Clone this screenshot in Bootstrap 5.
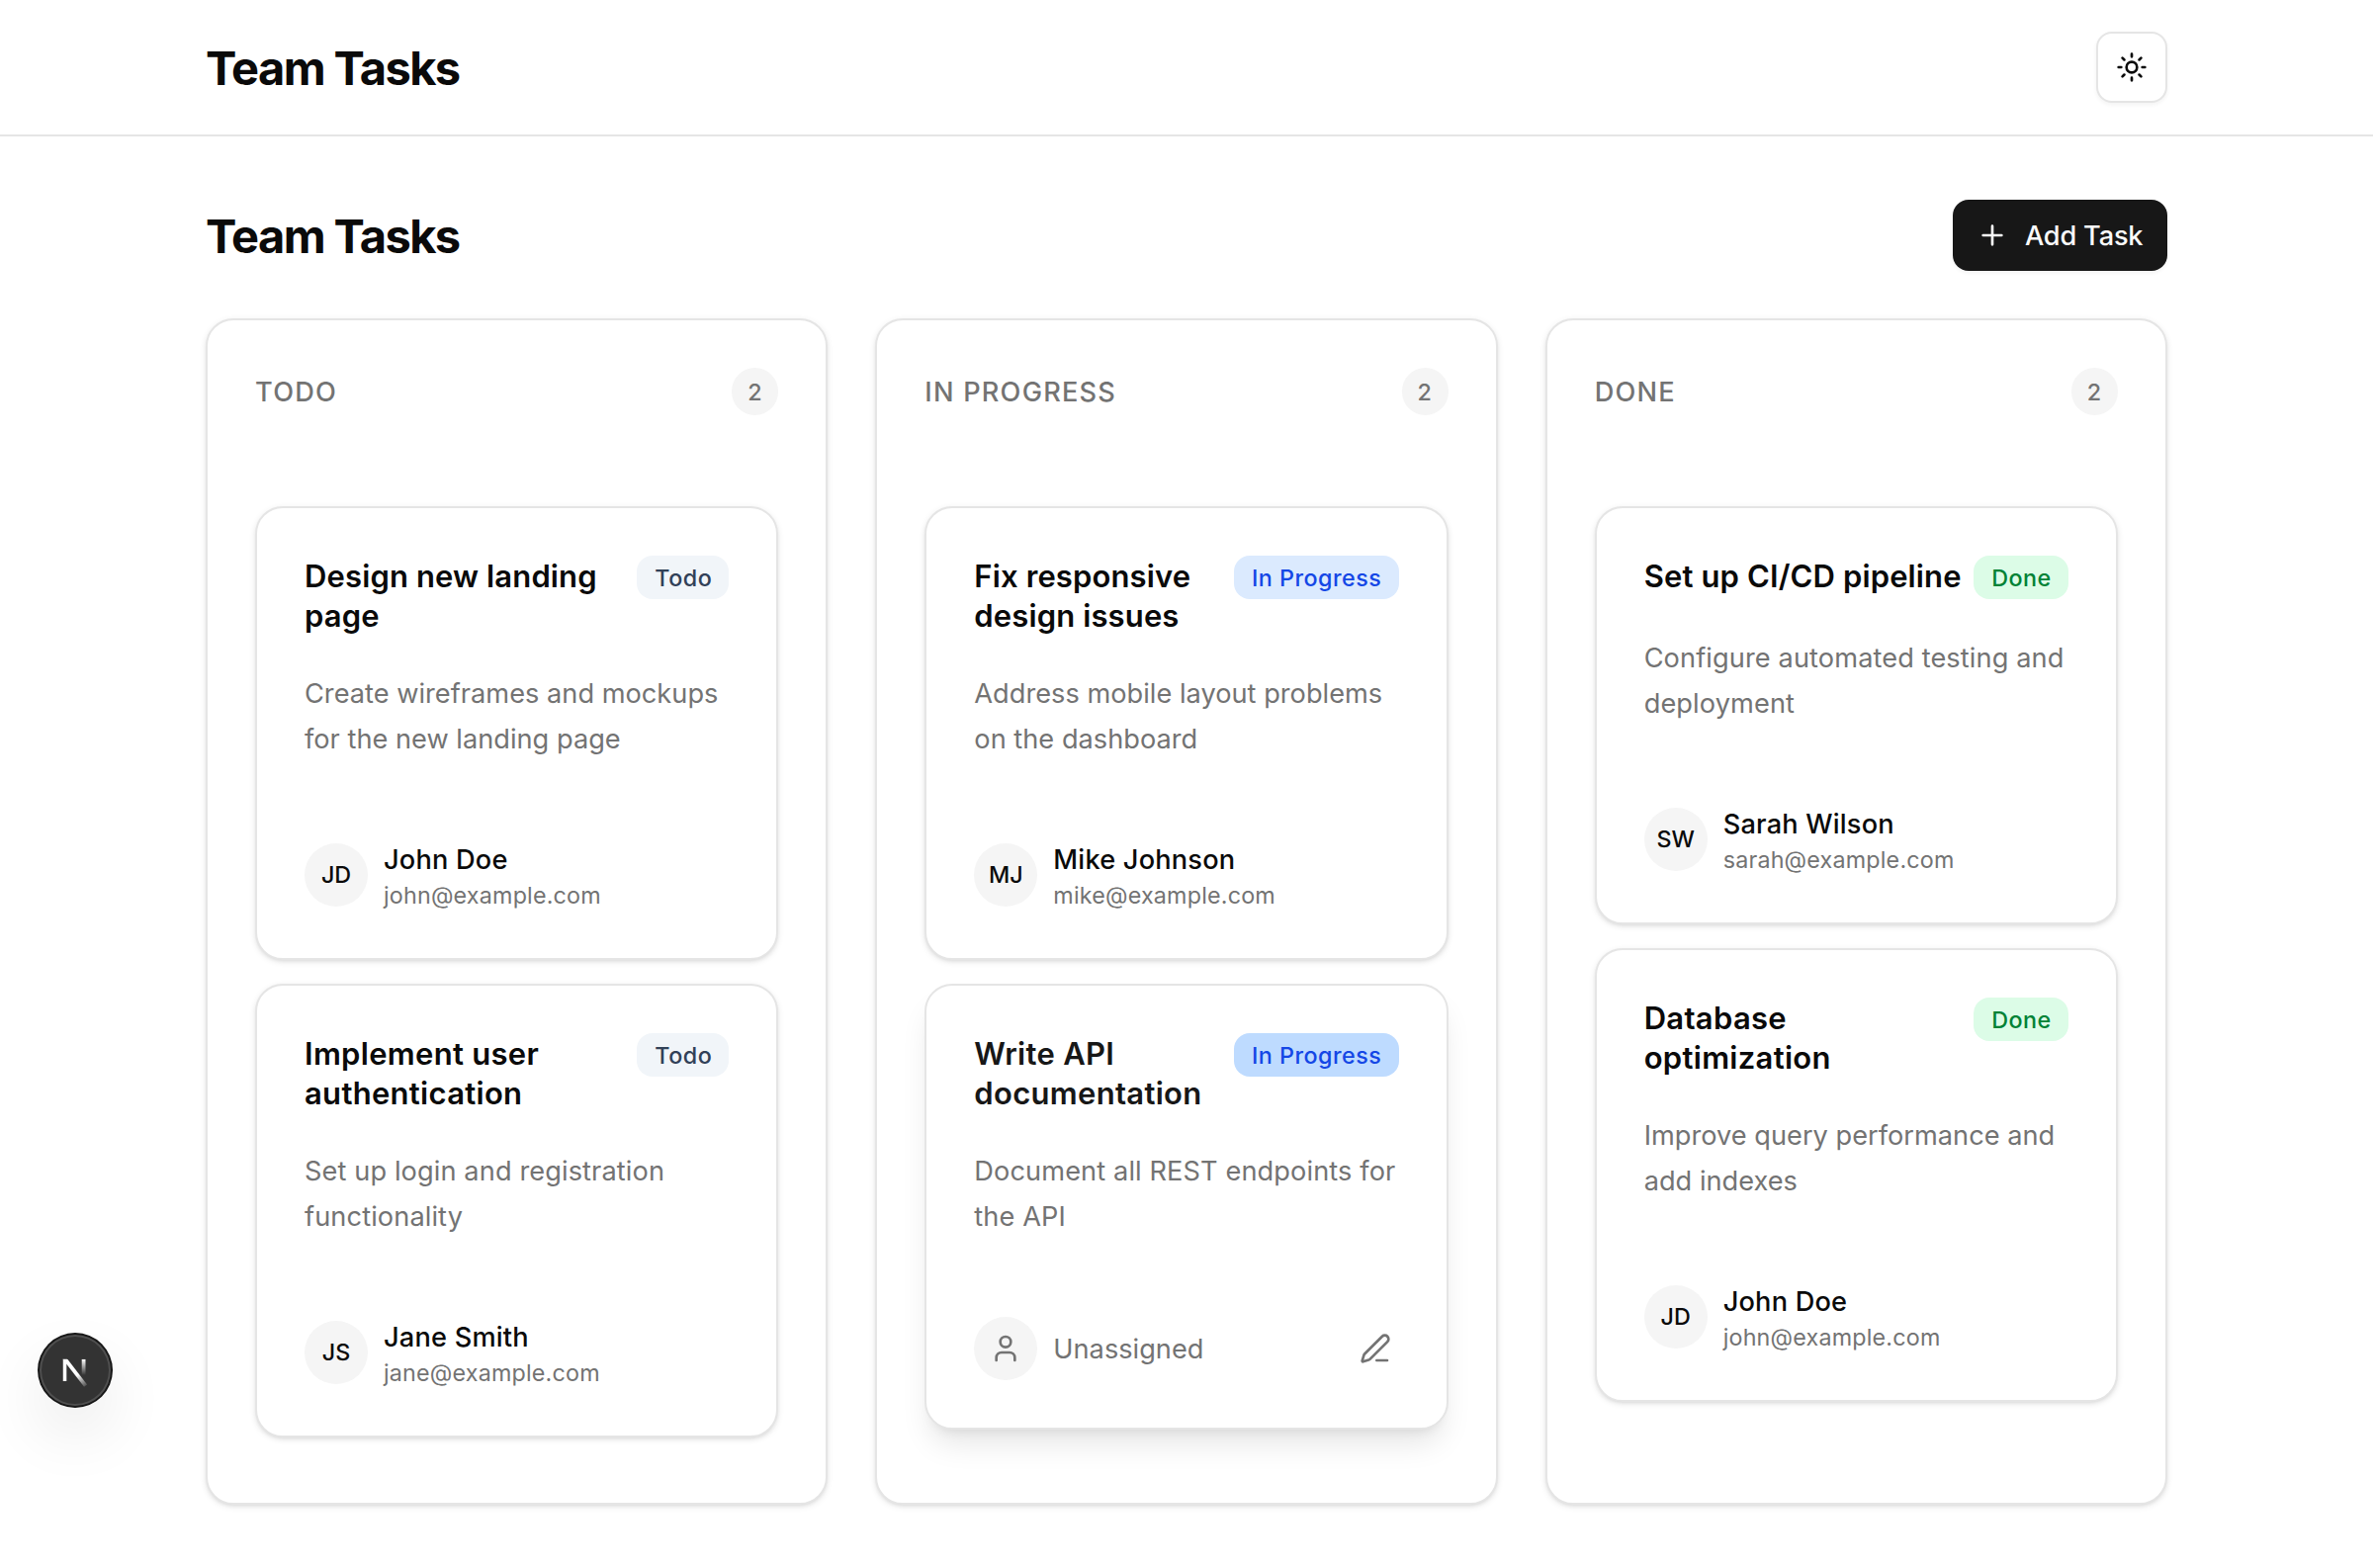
<!DOCTYPE html>
<html lang="en">
<head>
<meta charset="utf-8">
<meta name="viewport" content="width=device-width, initial-scale=1">
<title>Team Tasks</title>
<link href="https://cdn.jsdelivr.net/npm/bootstrap@5.3.0/dist/css/bootstrap.min.css" rel="stylesheet">
<style>
  body { font-family: Inter, "Liberation Sans", sans-serif; font-size: 27.2px; color: #0a0a0a; background: #fff; height: 1586px; overflow: hidden; }
  .wrap { padding-left: 208px; padding-right: 208px; }
  .site-header { height: 138px; border-bottom: 2px solid #e5e5e5; }
  .page-title { font-size: 47px; font-weight: 650; line-height: 64px; letter-spacing: -1.6px; padding-top: 2px; margin: 0; }
  .theme-btn { width: 72px; height: 72px; border: 2px solid #e5e5e5; border-radius: 16px; background: #fff; box-shadow: 0 2px 4px rgba(0,0,0,.05); color: #0a0a0a; }
  .add-btn, .add-btn:hover { width: 217px; height: 72px; border: 0; border-radius: 16px; background: #171717; color: #fafafa; font-size: 27.2px; font-weight: 500; letter-spacing: -.2px; padding: 0 24px; box-shadow: 0 2px 4px rgba(0,0,0,.05); gap: 17px; }
  .add-btn span { padding-top: 2px; }
  .ico { width: 32px; height: 32px; fill: none; stroke: currentColor; stroke-width: 2; stroke-linecap: round; stroke-linejoin: round; flex: none; display: block; }
  .main-area { padding-top: 64px; }
  .board { --bs-gutter-x: 48px; margin-top: 48px; }
  .lane, .task { border: 2px solid #e5e5e5; border-radius: 28px; background: #fff; box-shadow: 0 2px 6px rgba(0,0,0,.1), 0 2px 4px -2px rgba(0,0,0,.1); padding: 48px; color: inherit; }
  .lane { min-height: 1200px; }
  .lane-head { height: 48px; margin-bottom: 92px; }
  .lane-name { font-size: 27.2px; font-weight: 500; letter-spacing: 1.2px; color: #737373; line-height: 40px; margin: 0; padding-top: 2px; text-transform: uppercase; }
  .count { width: 47px; height: 48px; border-radius: 24px; background: #f5f5f5; color: #737373; font-size: 23.3px; font-weight: 500; padding: 2px 1px 0 0; }
  .task-title { font-size: 31px; font-weight: 600; line-height: 40px; letter-spacing: .13px; margin: 0 0 -1px; padding-top: 1px; white-space: nowrap; }
  .task-title.wide { letter-spacing: .3px; }
  .status { height: 44px; border-radius: 16px; font-size: 23.3px; font-weight: 500; letter-spacing: .5px; white-space: nowrap; flex: none; padding: 2px 0 0 1px; }
  .st-todo { width: 93px; background: #f1f5f9; color: #314158; }
  .st-prog { width: 167px; background: #dbeafe; color: #1447e6; }
  .st-done { width: 96px; background: #dcfce7; color: #008236; }
  .desc { color: #737373; line-height: 45.5px; letter-spacing: .1px; margin: 37px 0 79px; white-space: nowrap; }
  .desc.tight { letter-spacing: .01px; }
  .avatar { width: 64px; height: 64px; border-radius: 50%; background: #f5f5f5; font-size: 23.3px; font-weight: 500; flex: none; }
  .who { line-height: 40px; font-weight: 500; letter-spacing: .2px; padding-top: 1px; }
  .mail { line-height: 32px; font-size: 23.3px; color: #737373; letter-spacing: .19px; margin-bottom: -1px; }
  .soft { color: #737373; }
  .soft .label-text { padding-top: 2px; }
  .task.raised { box-shadow: 0 20px 30px -6px rgba(0,0,0,.1), 0 8px 12px -8px rgba(0,0,0,.1); }
  .raised .task-title { color: #171717; }
  .raised .st-prog { background: #bedbff; }
  .edit { margin-right: 8px; }
  .dev-badge { position: fixed; left: 40px; top: 1350px; width: 72px; height: 72px; border-radius: 50%; background: #333; box-shadow: 0 0 0 2px #171717, inset 0 0 0 2px rgba(255,255,255,.14), 0 28px 64px 0 rgba(0,0,0,.09); }
</style>
</head>
<body>
<header class="site-header wrap d-flex align-items-center justify-content-between">
  <h1 class="page-title">Team Tasks</h1>
  <button class="theme-btn btn p-0 d-flex align-items-center justify-content-center" aria-label="Toggle theme">
    <svg class="ico" viewBox="0 0 24 24"><circle cx="12" cy="12" r="4"/><path d="M12 2v2M12 20v2M4.93 4.93l1.41 1.41M17.66 17.66l1.41 1.41M2 12h2M20 12h2M6.34 17.66l-1.41 1.41M19.07 4.93l-1.41 1.41"/></svg>
  </button>
</header>
<main class="main-area wrap">
  <div class="d-flex align-items-center justify-content-between">
    <h2 class="page-title">Team Tasks</h2>
    <button class="btn add-btn d-flex align-items-center">
      <svg class="ico" viewBox="0 0 24 24"><path d="M5 12h14M12 5v14"/></svg><span>Add Task</span>
    </button>
  </div>
  <div class="row board">
    <section class="col-4">
      <div class="lane">
        <div class="lane-head d-flex align-items-center justify-content-between"><h3 class="lane-name">Todo</h3><span class="count d-flex align-items-center justify-content-center">2</span></div>
        <div class="d-flex flex-column gap-4">
          <article class="task">
            <div class="d-flex justify-content-between align-items-start"><h4 class="task-title">Design new landing<br>page</h4><span class="status st-todo d-flex align-items-center justify-content-center">Todo</span></div>
            <p class="desc tight">Create wireframes and mockups<br>for the new landing page</p>
            <div class="d-flex align-items-center gap-3"><span class="avatar d-flex align-items-center justify-content-center">JD</span><div><div class="who">John Doe</div><div class="mail">john@example.com</div></div></div>
          </article>
          <article class="task">
            <div class="d-flex justify-content-between align-items-start"><h4 class="task-title wide">Implement user<br>authentication</h4><span class="status st-todo d-flex align-items-center justify-content-center">Todo</span></div>
            <p class="desc">Set up login and registration<br>functionality</p>
            <div class="d-flex align-items-center gap-3"><span class="avatar d-flex align-items-center justify-content-center">JS</span><div><div class="who">Jane Smith</div><div class="mail">jane@example.com</div></div></div>
          </article>
        </div>
      </div>
    </section>
    <section class="col-4">
      <div class="lane">
        <div class="lane-head d-flex align-items-center justify-content-between"><h3 class="lane-name">In Progress</h3><span class="count d-flex align-items-center justify-content-center">2</span></div>
        <div class="d-flex flex-column gap-4">
          <article class="task">
            <div class="d-flex justify-content-between align-items-start"><h4 class="task-title">Fix responsive<br>design issues</h4><span class="status st-prog d-flex align-items-center justify-content-center">In Progress</span></div>
            <p class="desc tight">Address mobile layout problems<br>on the dashboard</p>
            <div class="d-flex align-items-center gap-3"><span class="avatar d-flex align-items-center justify-content-center">MJ</span><div><div class="who">Mike Johnson</div><div class="mail">mike@example.com</div></div></div>
          </article>
          <article class="task raised">
            <div class="d-flex justify-content-between align-items-start"><h4 class="task-title wide">Write API<br>documentation</h4><span class="status st-prog d-flex align-items-center justify-content-center">In Progress</span></div>
            <p class="desc">Document all REST endpoints for<br>the API</p>
            <div class="d-flex align-items-center gap-3 soft">
              <span class="avatar d-flex align-items-center justify-content-center"><svg class="ico" viewBox="0 0 24 24"><path d="M19 21v-2a4 4 0 0 0-4-4H9a4 4 0 0 0-4 4v2"/><circle cx="12" cy="7" r="4"/></svg></span>
              <span class="label-text">Unassigned</span>
              <span class="edit ms-auto"><svg class="ico" viewBox="0 0 24 24"><path d="M13 21h8"/><path d="M21.174 6.812a1 1 0 0 0-3.986-3.987L3.842 16.174a2 2 0 0 0-.5.83l-1.321 4.352a.5.5 0 0 0 .623.622l4.353-1.32a2 2 0 0 0 .83-.497z"/></svg></span>
            </div>
          </article>
        </div>
      </div>
    </section>
    <section class="col-4">
      <div class="lane">
        <div class="lane-head d-flex align-items-center justify-content-between"><h3 class="lane-name">Done</h3><span class="count d-flex align-items-center justify-content-center">2</span></div>
        <div class="d-flex flex-column gap-4">
          <article class="task">
            <div class="d-flex justify-content-between align-items-start"><h4 class="task-title">Set up CI/CD pipeline</h4><span class="status st-done d-flex align-items-center justify-content-center">Done</span></div>
            <p class="desc">Configure automated testing and<br>deployment</p>
            <div class="d-flex align-items-center gap-3"><span class="avatar d-flex align-items-center justify-content-center">SW</span><div><div class="who">Sarah Wilson</div><div class="mail">sarah@example.com</div></div></div>
          </article>
          <article class="task">
            <div class="d-flex justify-content-between align-items-start"><h4 class="task-title wide">Database<br>optimization</h4><span class="status st-done d-flex align-items-center justify-content-center">Done</span></div>
            <p class="desc tight">Improve query performance and<br>add indexes</p>
            <div class="d-flex align-items-center gap-3"><span class="avatar d-flex align-items-center justify-content-center">JD</span><div><div class="who">John Doe</div><div class="mail">john@example.com</div></div></div>
          </article>
        </div>
      </div>
    </section>
  </div>
</main>
<!-- Floating dev tools indicator -->
<div class="dev-badge">
  <svg width="72" height="72" viewBox="0 0 72 72" fill="none" class="d-block">
    <defs>
      <linearGradient id="diag" gradientUnits="userSpaceOnUse" x1="38" y1="41" x2="48" y2="54"><stop stop-color="#fff"/><stop offset="1" stop-color="#fff" stop-opacity="0"/></linearGradient>
      <linearGradient id="stem" gradientUnits="userSpaceOnUse" x1="0" y1="25" x2="0" y2="41"><stop stop-color="#fff"/><stop offset="1" stop-color="#fff" stop-opacity="0"/></linearGradient>
      <clipPath id="top"><rect x="23.5" y="24.7" width="48" height="40"/></clipPath>
    </defs>
    <g clip-path="url(#top)" stroke-width="3.8">
      <path d="M25.4 47V25" stroke="#fff"/>
      <path d="M24.2 22.6L46.6 51.6" stroke="url(#diag)"/>
      <path d="M44.6 24.7V41" stroke="url(#stem)"/>
    </g>
  </svg>
</div>
<script src="https://cdn.jsdelivr.net/npm/bootstrap@5.3.0/dist/js/bootstrap.bundle.min.js"></script>
</body>
</html>
